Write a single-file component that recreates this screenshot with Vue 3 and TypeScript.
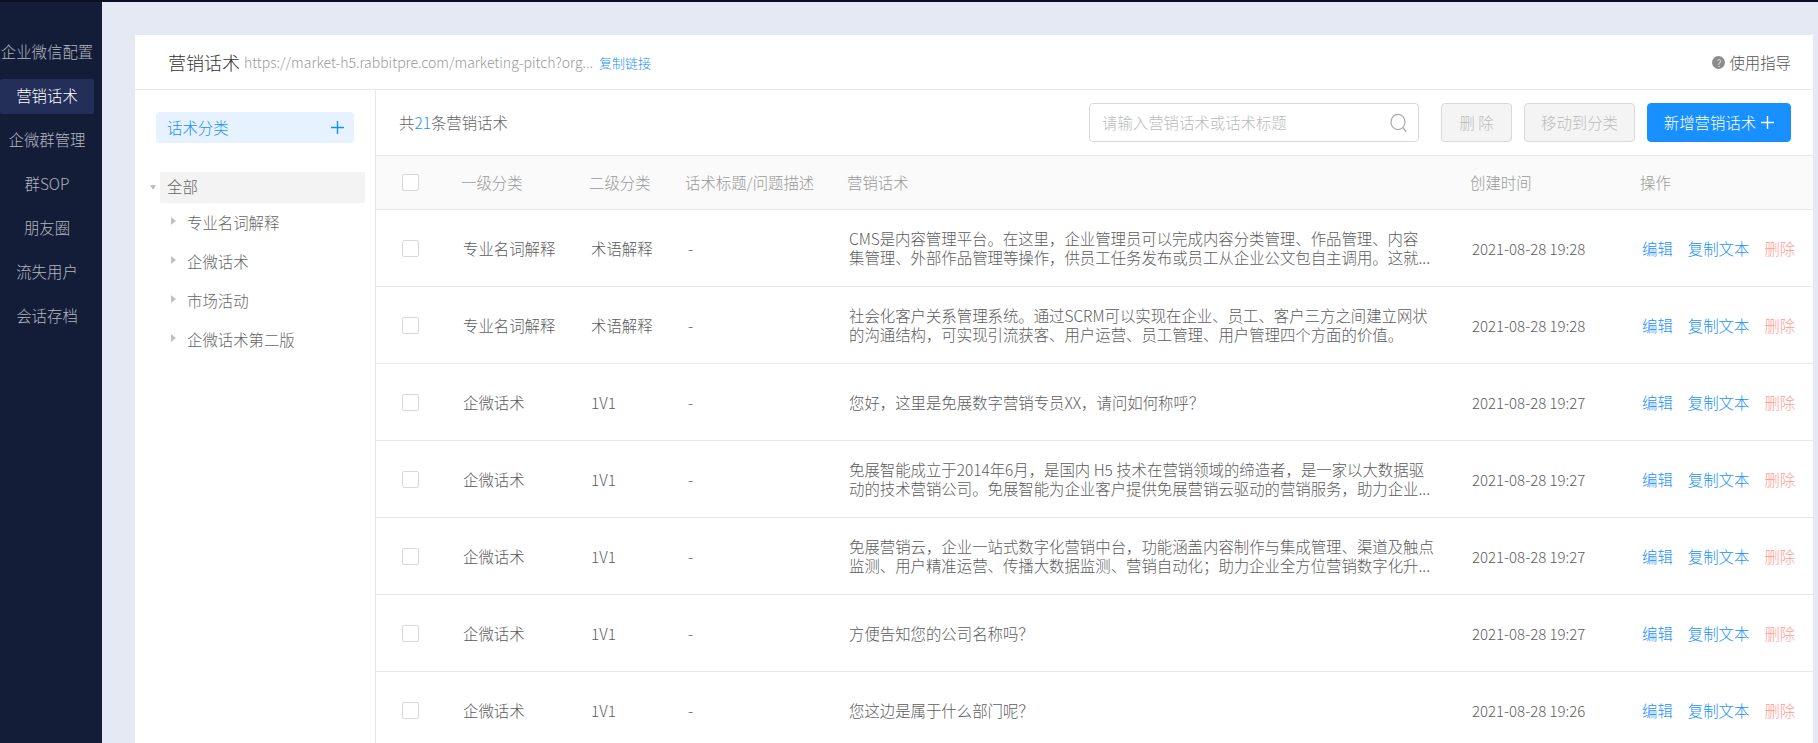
<template>
  <div class="page">
    <aside class="side">
      <div
        v-for="item in menu"
        :key="item"
        class="side-item"
        :class="{ active: item === '营销话术' }"
      >
        {{ item }}
      </div>
    </aside>

    <main class="main">
      <section class="card">
        <header class="head">
          <h1 class="title">营销话术</h1>
          <span class="url">https://market-h5.rabbitpre.com/marketing-pitch?org...</span>
          <a class="copy-link">复制链接</a>
          <div class="guide">
            <i class="guide-icon">?</i>
            <span>使用指导</span>
          </div>
        </header>

        <div class="body">
          <div class="tree-panel">
            <div class="tree-add">
              <span class="lift">话术分类</span>
              <svg width="15" height="15" viewBox="0 0 15 15">
                <path d="M7.5 1v13M1 7.5h13" stroke="#1890ff" stroke-width="1.4" fill="none" />
              </svg>
            </div>
            <div class="tree">
              <div class="tree-root">
                <i class="caret-down"></i>
                <span class="tree-root-label">全部</span>
              </div>
              <div v-for="node in categories" :key="node" class="tree-node">
                <i class="caret-right"></i>
                <span class="lift">{{ node }}</span>
              </div>
            </div>
          </div>

          <div class="content">
            <div class="toolbar">
              <div class="count lift">共<em>21</em>条营销话术</div>
              <div class="search">
                <span class="placeholder lift">请输入营销话术或话术标题</span>
                <svg width="18" height="20" viewBox="0 0 18 20">
                  <ellipse cx="8" cy="9" rx="7" ry="7.6" fill="none" stroke="#aaa" stroke-width="1.2" />
                  <path d="M12.6 14.4l3.6 4.4" stroke="#aaa" stroke-width="1.4" fill="none" />
                </svg>
              </div>
              <button class="btn disabled del-btn">删 除</button>
              <button class="btn disabled move-btn">移动到分类</button>
              <button class="btn primary">
                新增营销话术
                <svg class="plus" width="13" height="13" viewBox="0 0 13 13">
                  <path d="M6.5 0v13M0 6.5h13" stroke="#fff" stroke-width="1.4" fill="none" />
                </svg>
              </button>
            </div>

            <div class="row row-head">
              <div class="cell-check"><i class="checkbox"></i></div>
              <div class="lift">一级分类</div>
              <div class="lift">二级分类</div>
              <div class="lift">话术标题/问题描述</div>
              <div class="lift">营销话术</div>
              <div class="lift">创建时间</div>
              <div class="lift">操作</div>
            </div>

            <div v-for="(row, i) in rows" :key="i" class="row row-data">
              <div class="cell-check"><i class="checkbox"></i></div>
              <div class="pad">{{ row.first }}</div>
              <div class="pad">{{ row.second }}</div>
              <div class="pad-dash">-</div>
              <div class="pad"><p class="pitch">{{ row.text }}</p></div>
              <div class="pad time">{{ row.time }}</div>
              <div class="pad actions">
                <a class="blue">编辑</a>
                <a class="blue">复制文本</a>
                <a class="red">删除</a>
              </div>
            </div>
          </div>
        </div>
      </section>
    </main>
  </div>
</template>

<script setup lang="ts">
interface PitchRow {
  first: string
  second: string
  text: string
  time: string
}

const menu = ['企业微信配置', '营销话术', '企微群管理', '群SOP', '朋友圈', '流失用户', '会话存档']
const categories = ['专业名词解释', '企微话术', '市场活动', '企微话术第二版']

const rows: PitchRow[] = [
  {
    first: '专业名词解释',
    second: '术语解释',
    text: 'CMS是内容管理平台。在这里，企业管理员可以完成内容分类管理、作品管理、内容\n集管理、外部作品管理等操作，供员工任务发布或员工从企业公文包自主调用。这就...',
    time: '2021-08-28 19:28',
  },
  {
    first: '专业名词解释',
    second: '术语解释',
    text: '社会化客户关系管理系统。通过SCRM可以实现在企业、员工、客户三方之间建立网状的沟通结构，可实现引流获客、用户运营、员工管理、用户管理四个方面的价值。',
    time: '2021-08-28 19:28',
  },
  { first: '企微话术', second: '1V1', text: '您好，这里是免展数字营销专员XX，请问如何称呼？', time: '2021-08-28 19:27' },
  {
    first: '企微话术',
    second: '1V1',
    text: '免展智能成立于2014年6月，是国内 H5 技术在营销领域的缔造者，是一家以大数据驱动的技术营销公司。免展智能为企业客户提供免展营销云驱动的营销服务，助力企业...',
    time: '2021-08-28 19:27',
  },
  {
    first: '企微话术',
    second: '1V1',
    text: '免展营销云，企业一站式数字化营销中台，功能涵盖内容制作与集成管理、渠道及触点监测、用户精准运营、传播大数据监测、营销自动化；助力企业全方位营销数字化升...',
    time: '2021-08-28 19:27',
  },
  { first: '企微话术', second: '1V1', text: '方便告知您的公司名称吗？', time: '2021-08-28 19:27' },
  { first: '企微话术', second: '1V1', text: '您这边是属于什么部门呢？', time: '2021-08-28 19:26' },
]
</script>

<style>
html,
body {
  margin: 0;
  height: 100%;
  overflow: hidden;
}
</style>

<style scoped>
.page {
  display: flex;
  height: 743px;
  border-top: 2px solid #0b0f22;
  box-sizing: border-box;
  background: #e5e9f4;
  font-family: "Noto Sans CJK SC", "Noto Sans", sans-serif;
  font-size: 15.4px;
  font-weight: 300;
  color: #666;
}

/* 文字基线比参考图低 1px，统一上提 */
.lift {
  padding-bottom: 2px;
}

.side {
  flex: 0 0 102px;
  background: #131d38;
  padding-top: 33px;
  display: flex;
  flex-direction: column;
  gap: 9px;
}

.side-item {
  width: 94px;
  height: 35px;
  line-height: 33px;
  text-align: center;
  color: #b4b7c0;
  white-space: nowrap;
  border-radius: 2px;
}

.side-item.active {
  background: #232f58;
  color: #fff;
}

.main {
  flex: 1;
  min-width: 0;
  padding: 33px 5px 0 33px;
  display: flex;
}

.card {
  flex: 1;
  min-width: 0;
  background: #fff;
  display: flex;
  flex-direction: column;
  overflow: hidden;
}

.head {
  height: 54px;
  flex: none;
  display: flex;
  align-items: center;
  padding: 0 22px 0 33px;
  border-bottom: 1px solid #e8e8e8;
}

.title {
  margin: 0 4px 0 0;
  font-size: 18px;
  font-weight: 300;
  color: #333;
}

.url {
  font-size: 14px;
  color: #999;
}

.copy-link {
  margin-left: 6px;
  font-size: 13px;
  color: #1890ff;
}

.guide {
  margin-left: auto;
  display: flex;
  align-items: center;
  gap: 4px;
  color: #555;
}

.guide-icon {
  width: 13px;
  height: 13px;
  border-radius: 50%;
  background: #8c8c8c;
  color: #fff;
  font-size: 10px;
  font-style: normal;
  line-height: 13px;
  text-align: center;
}

.body {
  flex: 1;
  display: flex;
  min-height: 0;
}

.tree-panel {
  flex: 0 0 241px;
  box-sizing: border-box;
  padding: 22px 10px 0 15px;
  border-right: 1px solid #e8e8e8;
}

.tree-add {
  margin: 0 11px 0 6px;
  height: 31px;
  display: flex;
  align-items: center;
  justify-content: space-between;
  padding: 0 9px 0 11px;
  background: #e6f2ff;
  border-radius: 4px;
  color: #1890ff;
}

.tree {
  margin-top: 29px;
}

.tree-root {
  display: flex;
  align-items: center;
}

.caret-down {
  width: 0;
  height: 0;
  margin-right: 4px;
  border-style: solid;
  border-width: 5px 3.5px 0;
  border-color: #c0c0c0 transparent transparent;
}

.tree-root-label {
  flex: 1;
  height: 31px;
  line-height: 29px;
  padding-left: 7px;
  background: #f3f3f3;
  border-radius: 2px;
}

.tree-node {
  height: 39px;
  display: flex;
  align-items: center;
  padding-left: 21px;
}

.tree-node:first-of-type {
  margin-top: 1px;
}

.caret-right {
  width: 0;
  height: 0;
  margin-right: 11px;
  border-style: solid;
  border-width: 4px 0 4px 5px;
  border-color: transparent transparent transparent #c0c0c0;
  transform: translateY(-2px);
}

.content {
  flex: 1;
  min-width: 0;
}

.toolbar {
  height: 66px;
  box-sizing: border-box;
  display: flex;
  align-items: center;
  padding: 0 22px 0 23px;
  border-bottom: 1px solid #e8e8e8;
}

.count {
  margin-right: auto;
  color: #666;
}

.count em {
  font-style: normal;
  color: #1890ff;
}

.search {
  width: 330px;
  height: 39px;
  box-sizing: border-box;
  display: flex;
  align-items: center;
  justify-content: space-between;
  padding: 0 10px 0 12px;
  border: 1px solid #d9d9d9;
  border-radius: 4px;
}

.placeholder {
  color: #bbb;
}

.btn {
  height: 39px;
  box-sizing: border-box;
  border-radius: 4px;
  font: inherit;
  padding: 0 0 2px;
}

.disabled {
  background: #f4f4f4;
  border: 1px solid #d9d9d9;
  color: #bbb;
}

.del-btn {
  width: 71px;
  margin-left: 22px;
}

.move-btn {
  width: 111px;
  margin-left: 12px;
}

.primary {
  width: 144px;
  margin-left: 12px;
  background: #1890ff;
  border: 1px solid #1890ff;
  color: #fff;
  display: flex;
  align-items: center;
  justify-content: center;
  gap: 5px;
}

.plus {
  transform: translateY(1px);
}

.row {
  display: grid;
  grid-template-columns: 85px 128px 96px 162px 623px 170px 1fr;
  align-items: center;
  border-bottom: 1px solid #e8e8e8;
  box-sizing: border-box;
}

.row-head {
  height: 54px;
  background: #fafafa;
  color: #999;
}

.row-data {
  height: 77px;
  color: #5c5c5c;
}

.cell-check {
  padding-left: 26px;
}

.checkbox {
  display: block;
  width: 17px;
  height: 17px;
  box-sizing: border-box;
  background: #fff;
  border: 1px solid #d9d9d9;
  border-radius: 2px;
}

.pad {
  padding-left: 2px;
}

.pad-dash {
  padding-left: 3px;
}

.pitch {
  margin: 0;
  width: 586px;
  line-height: 19px;
  white-space: pre-line;
}

.time {
  font-size: 15px;
}

.actions {
  display: flex;
  gap: 15px;
  white-space: nowrap;
}

.blue {
  color: #1890ff;
}

.red {
  color: #ff9a94;
}
</style>
